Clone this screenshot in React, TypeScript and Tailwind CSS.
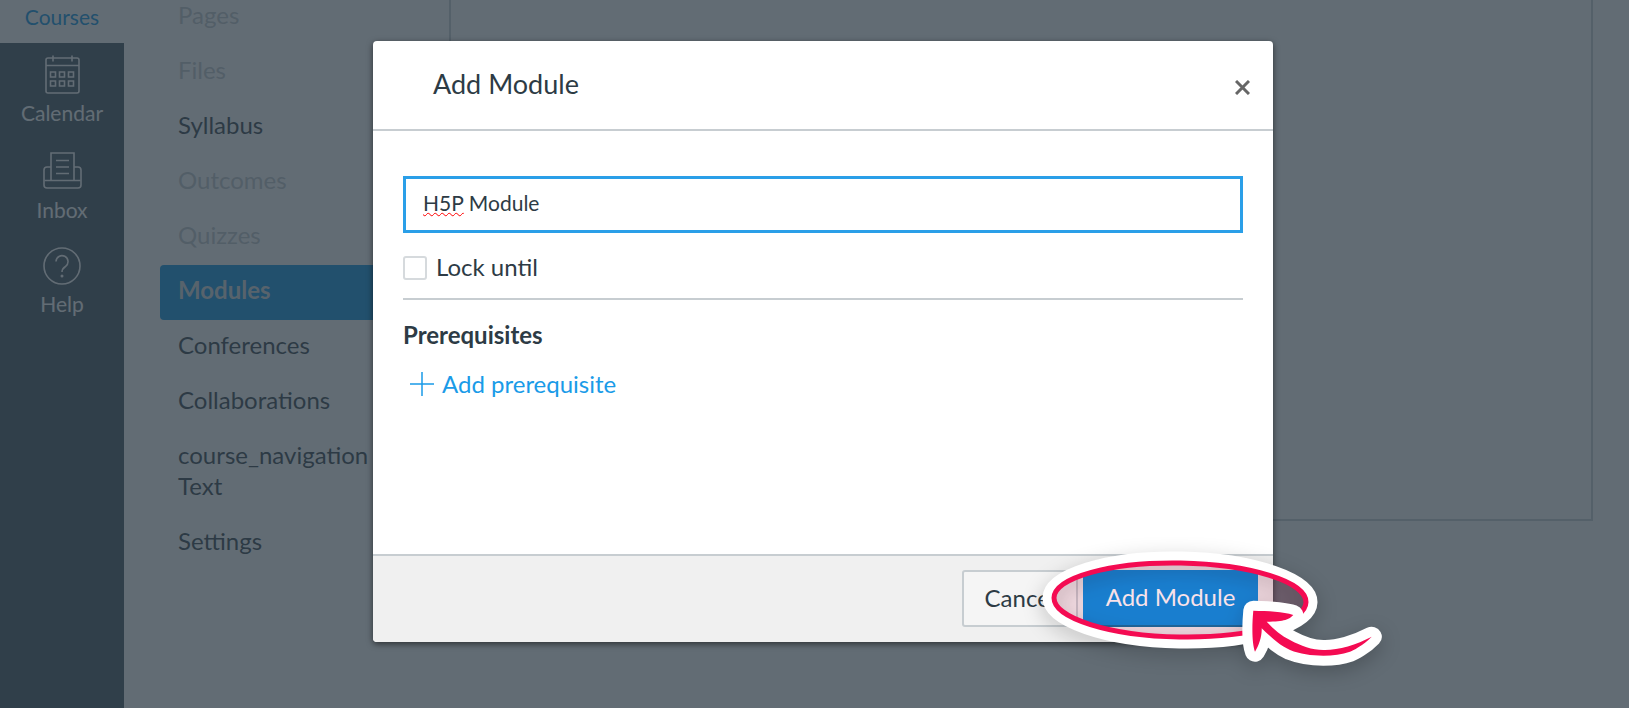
const courseLinks = [
  { label: "Pages", off: true },
  { label: "Files", off: true },
  { label: "Syllabus" },
  { label: "Outcomes", off: true },
  { label: "Quizzes", off: true },
  { label: "Modules", active: true },
  { label: "Conferences" },
  { label: "Collaborations" },
  { label: "course_navigation Text", wrap: true },
  { label: "Settings" },
];

function CalendarIcon() {
  return (
    <svg width="40" height="48" viewBox="41 47 40 48" fill="none" stroke="currentColor" strokeWidth="1.6">
      <rect x="45" y="58" width="33" height="35" rx="2" />
      <path d="M45 65.5h33M52 55.5v6M71 55.5v6" />
      <path d="M49.5 72h5v5h-5zM58.5 72h5v5h-5zM67.5 72h5v5h-5zM49.5 81h5v5h-5zM58.5 81h5v5h-5zM67.5 81h5v5h-5z" />
    </svg>
  );
}

function InboxIcon() {
  return (
    <svg width="40" height="38" viewBox="41 152 40 38" fill="none" stroke="currentColor" strokeWidth="1.6">
      <path d="M50 180v-27h23v27" />
      <path d="M55 160.5h13M55 167h13M55 173.500h13" />
      <path d="M50 167h-4a3 3 0 0 0-3 3v15a3 3 0 0 0 3 3h31a3 3 0 0 0 3-3v-15a3 3 0 0 0-3-3h-4" />
      <path d="M43.500 180.500h4l2.500 0h23l2.500 0h4" />
    </svg>
  );
}

function HelpIcon() {
  return (
    <svg width="40" height="40" viewBox="40.500 245 40 40" fill="none" stroke="currentColor" strokeWidth="1.6">
      <circle cx="60.500" cy="265" r="18" />
      <path d="M54.500 260.500a6 6 0 1 1 9.500 5c-2.500 1.700-3.500 2.800-3.500 5.500" />
      <circle cx="60.500" cy="275" r="1.500" fill="currentColor" stroke="none" />
    </svg>
  );
}

function Annotation() {
  return (
    <svg
      className="absolute left-[1030px] top-[540px] drop-shadow-[0_6px_10px_rgba(0,0,0,0.22)]"
      width="360"
      height="135"
      viewBox="1030 540 360 135"
      fill="none"
    >
      <g transform="rotate(1 1180 600)">
        <ellipse cx="1180" cy="600" rx="132" ry="43" stroke="#fff" strokeWidth="11" />
        <ellipse cx="1180" cy="600" rx="126" ry="37" fill="#f51155" fillOpacity="0.1" stroke="#f40b52" strokeWidth="5" />
      </g>
      <path
        d="M1253.300 610.700C1268 611 1283 611.500 1293.300 615C1289 619.500 1285 621.500 1266.700 621.700C1274 630 1282 636 1290 640C1301 646 1312 650 1323.300 650C1337 650.500 1356 645 1371.700 636.700C1364 645 1352 651 1350 651.700C1342 654.500 1333 655.700 1323.300 655.700C1311 655.700 1300 654 1290 650C1281 646 1274 640 1261.700 628.300C1262 636 1259 645 1255 651.700C1252.500 645 1251.500 630 1253.300 610.700Z"
        fill="#f40b52"
        stroke="#fff"
        strokeWidth="20"
        strokeLinejoin="round"
        paintOrder="stroke"
      />
    </svg>
  );
}

export default function App() {
  return (
    <div className="relative flex h-[708px] w-full overflow-hidden bg-white font-['Lato','Noto_Sans',sans-serif] text-[#2d3b45]">
      <aside className="flex w-[124px] shrink-0 flex-col items-center bg-[#394b58] text-white">
        <div className="flex h-[43px] w-full justify-center bg-white pt-[4px] text-[21px] leading-[26px] text-[#008ee2]">
          Courses
        </div>
        <div className="flex flex-col items-center pt-[4px]">
          <CalendarIcon />
          <span className="mt-[5px] text-[21px] leading-[26px]">Calendar</span>
        </div>
        <div className="mt-[26px] flex flex-col items-center">
          <InboxIcon />
          <span className="mt-[7px] text-[21px] leading-[26px]">Inbox</span>
        </div>
        <div className="mt-[23px] flex flex-col items-center">
          <HelpIcon />
          <span className="mt-[5px] text-[21px] leading-[26px]">Help</span>
        </div>
      </aside>

      <nav className="-mt-[10px] w-[325px] shrink-0 pl-[36px] text-[24px]">
        {courseLinks.map((link) => (
          <div
            key={link.label}
            className={
              link.active
                ? "flex h-[55px] items-center rounded-l-[4px] bg-[#008ee2] pb-[6px] pl-[18px] font-bold text-[#d3d9dd]"
                : link.wrap
                  ? "flex min-h-[86px] w-[225px] items-center pb-[6px] pl-[18px] leading-[31px]"
                  : "flex h-[55px] items-center pb-[6px] pl-[18px]"
            }
          >
            <span className={link.off ? "text-[#bfc6cc]" : ""}>{link.label}</span>
          </div>
        ))}
      </nav>

      <main className="h-[521px] w-[1144px] shrink-0 border-x-2 border-b-2 border-[#c7cdd1]" />

      <div className="absolute inset-0 bg-[#2d3b45]/75">
        <div className="ml-[373px] mt-[41px] flex h-[601px] w-[900px] flex-col rounded-[4px] bg-white shadow-[0_2px_6px_rgba(0,0,0,0.55)]">
          <header className="flex h-[90px] shrink-0 items-center justify-between border-b-2 border-[#c7cdd1] pl-[60px] pr-[23px]">
            <h2 className="pb-[2px] text-[27px] font-normal text-[#2d3b45]">Add Module</h2>
            <svg width="15" height="15" viewBox="0 0 15 15" stroke="#666" strokeWidth="3" className="mt-[4px]">
              <path d="M1 1l13 13M14 1L1 14" />
            </svg>
          </header>

          <div className="flex-1 px-[30px] pt-[45px]">
            <div className="flex h-[57px] items-center border-[3px] border-[#2a9fe8] pb-[3px] pl-[17px] text-[21px]">
              <span className="underline decoration-[#f00] decoration-wavy decoration-1 underline-offset-1">H5P</span>
              <span className="ml-[5px]">Module</span>
            </div>
            <label className="mt-[21px] flex items-center gap-[9px] text-[24px] leading-[26px]">
              <span className="mt-[2px] h-[24px] w-[24px] rounded-[3px] border-2 border-[#d6dadd]" />
              Lock until
            </label>
            <div className="mt-[18px] h-[2px] bg-[#c7cdd1]" />
            <h3 className="mt-[21px] text-[24px] font-bold leading-[28px]">Prerequisites</h3>
            <a className="mt-[21px] flex items-center gap-[8px] pl-[7px] text-[24px] leading-[28px] text-[#1a9be8]">
              <svg width="24" height="24" viewBox="0 0 24 24" stroke="currentColor" strokeWidth="1.500">
                <path d="M0 12h24M12 0v24" />
              </svg>
              Add prerequisite
            </a>
          </div>

          <footer className="flex h-[88px] shrink-0 items-start justify-end gap-[5px] rounded-b-[4px] border-t-2 border-[#c7cdd1] bg-[#f0f0f0] pr-[15px] pt-[14px]">
            <button className="h-[57px] w-[116px] rounded-[3px] border-2 border-[#c7cdd1] bg-[#f5f5f5] pb-[2px] text-[24px] text-[#2d3b45]">
              Cancel
            </button>
            <button className="h-[57px] w-[175px] rounded-[3px] border-b-2 border-[#0770a3] bg-[#008ee2] pb-[2px] text-[24px] text-white">
              Add Module
            </button>
          </footer>
        </div>
      </div>

      <Annotation />
    </div>
  );
}
